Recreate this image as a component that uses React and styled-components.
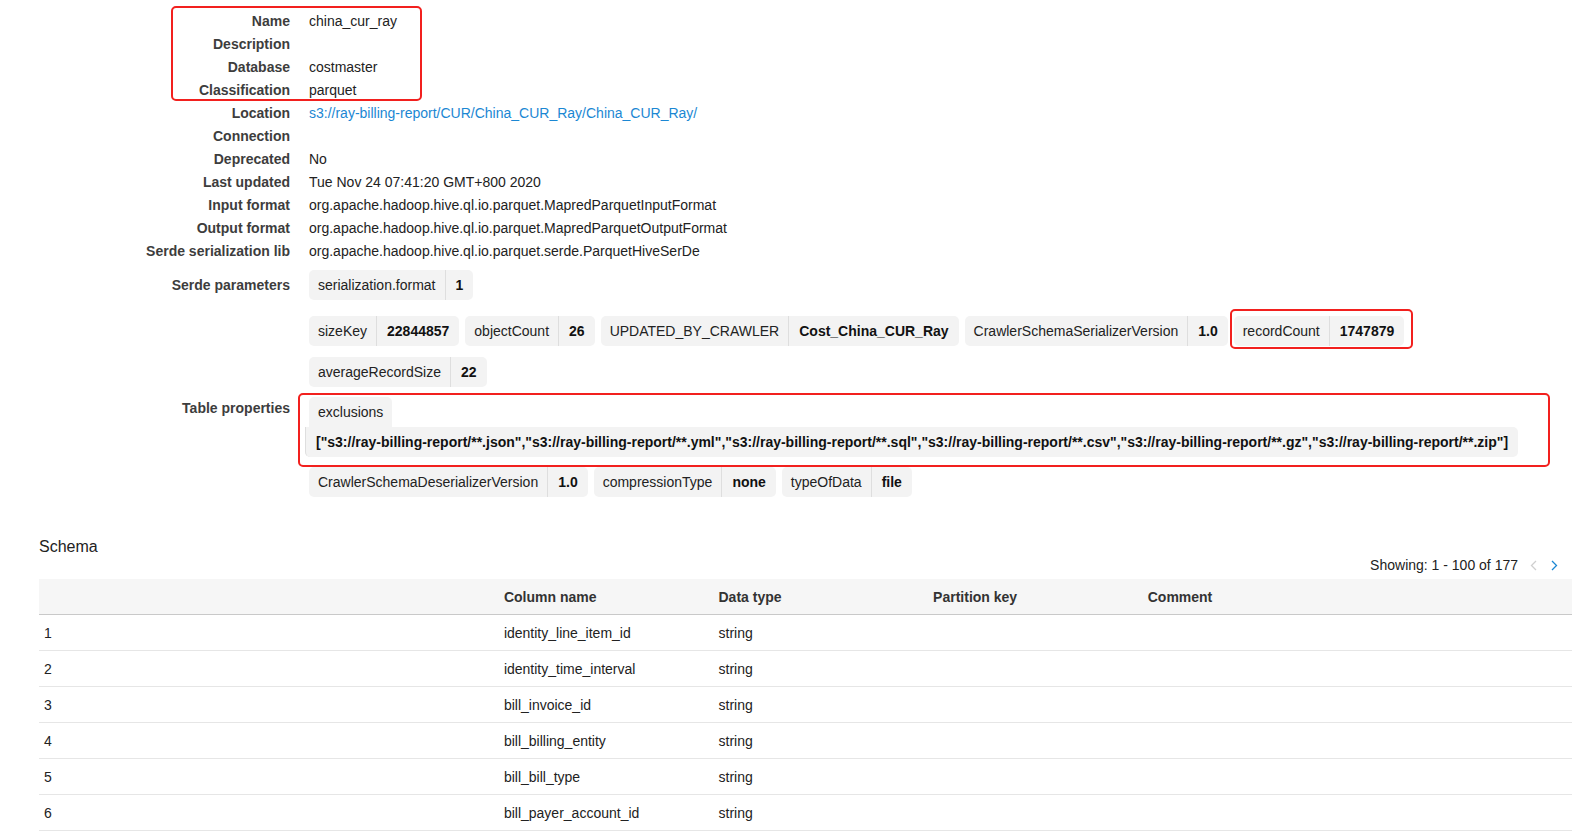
import styled, { createGlobalStyle } from "styled-components"

const GlobalStyle = createGlobalStyle`
   *, *::before, *::after {
      box-sizing: border-box;
   }
   body {
      margin: 0;
      background: #fff;
      font-family: "Liberation Sans", Arial, sans-serif;
      font-size: 14px;
      color: #222;
   }
`

const Page = styled.div`
   width: 1577px;
   padding-top: 10px;
`

const Details = styled.div`
   position: relative;
   display: grid;
   grid-template-columns: 290px 1fr;
   column-gap: 19px;
   line-height: 23px;
`

const Label = styled.div`
   text-align: right;
   font-weight: bold;
   color: #3d3d3d;
   line-height: ${(p) => p.$lh || 23}px;
   margin-top: ${(p) => p.$mt || 0}px;
`

const Value = styled.div`
   color: #222;
   min-height: 23px;
`

const Link = styled.a`
   color: #1b87d3;
   text-decoration: none;
`

const ChipStack = styled.div`
   display: flex;
   flex-direction: column;
   align-items: flex-start;
   padding-top: ${(p) => p.$pt || 0}px;
`

const ChipRow = styled.div`
   display: flex;
   gap: 6px;
   margin-bottom: ${(p) => p.$mb || 0}px;
`

const Chip = styled.div`
   display: flex;
   height: 30px;
   line-height: 30px;
   background: #f3f3f3;
   border-radius: 5px;
   white-space: nowrap;
`

const ChipKey = styled.span`
   padding: 0 9px 0 9px;
   color: #222;
`

const ChipVal = styled.span`
   padding: 0 10px;
   font-weight: bold;
   color: #111;
   border-left: 1px solid #dedede;
`

const WrapChip = styled.div`
   display: flex;
   flex-direction: column;
   align-items: flex-start;
   margin-bottom: 10px;
`

const WrapKey = styled.div`
   height: 30px;
   line-height: 30px;
   padding: 0 9px;
   background: #f3f3f3;
   border-radius: 5px 5px 0 0;
`

const WrapVal = styled.div`
   height: 30px;
   line-height: 30px;
   margin-left: -4px;
   padding: 0 10px 0 10px;
   background: #f3f3f3;
   border-left: 1px solid #dedede;
   border-radius: 0 5px 5px 5px;
   font-weight: bold;
   color: #111;
   white-space: nowrap;
`

const Annotation = styled.div`
   position: absolute;
   border: 2.5px solid #f2201e;
   border-radius: 5px;
   pointer-events: none;
`

const Schema = styled.section`
   margin-top: 40px;
   padding: 0 5px 0 39px;
`

const Title = styled.div`
   font-size: 16px;
   line-height: 20px;
   color: #222;
`

const Pager = styled.div`
   display: flex;
   justify-content: flex-end;
   align-items: center;
   gap: 12px;
   margin-top: -2px;
   padding-right: 14px;
   line-height: 20px;
   color: #222;
`

const PagerButtons = styled.div`
   display: flex;
   align-items: center;
   gap: 14px;
`

const Table = styled.div`
   margin-top: 4px;
   width: 1533px;
`

const Row = styled.div`
   display: grid;
   grid-template-columns: 30% 14% 14% 14% 28%;
   height: 36px;
   align-items: center;
   background: ${(p) => (p.$head ? "#f6f6f6" : "transparent")};
   border-bottom: 1px solid ${(p) => (p.$head ? "#c9c9c9" : "#e6e6e6")};
   font-weight: ${(p) => (p.$head ? "bold" : "normal")};
   color: ${(p) => (p.$head ? "#333" : "#222")};
`

const Cell = styled.div`
   padding-left: 5px;
   white-space: nowrap;
`

const Chevron = ({ dir, color }) => (
   <svg width="7" height="11" viewBox="0 0 7 11">
      <path
         d={dir === "left" ? "M6 1 L1.5 5.5 L6 10" : "M1 1 L5.5 5.5 L1 10"}
         fill="none"
         stroke={color}
         strokeWidth="1.3"
      />
   </svg>
)

const fields = [
   ["Name", "china_cur_ray"],
   ["Description", ""],
   ["Database", "costmaster"],
   ["Classification", "parquet"],
   ["Location", <Link href="#">s3://ray-billing-report/CUR/China_CUR_Ray/China_CUR_Ray/</Link>],
   ["Connection", ""],
   ["Deprecated", "No"],
   ["Last updated", "Tue Nov 24 07:41:20 GMT+800 2020"],
   ["Input format", "org.apache.hadoop.hive.ql.io.parquet.MapredParquetInputFormat"],
   ["Output format", "org.apache.hadoop.hive.ql.io.parquet.MapredParquetOutputFormat"],
   ["Serde serialization lib", "org.apache.hadoop.hive.ql.io.parquet.serde.ParquetHiveSerDe"],
]

const exclusions =
   '["s3://ray-billing-report/**.json","s3://ray-billing-report/**.yml","s3://ray-billing-report/**.sql","s3://ray-billing-report/**.csv","s3://ray-billing-report/**.gz","s3://ray-billing-report/**.zip"]'

const columns = [
   "identity_line_item_id",
   "identity_time_interval",
   "bill_invoice_id",
   "bill_billing_entity",
   "bill_bill_type",
   "bill_payer_account_id",
]

function KV({ k, v }) {
   return (
      <Chip>
         <ChipKey>{k}</ChipKey>
         <ChipVal>{v}</ChipVal>
      </Chip>
   )
}

export default function App() {
   return (
      <Page>
         <GlobalStyle />
         <Details>
            {fields.map(([label, value]) => (
               <>
                  <Label key={label}>{label}</Label>
                  <Value>{value}</Value>
               </>
            ))}

            <Label $lh={30} $mt={7}>Serde parameters</Label>
            <ChipStack $pt={7}>
               <ChipRow $mb={16}>
                  <KV k="serialization.format" v="1" />
               </ChipRow>
               <ChipRow $mb={11}>
                  <KV k="sizeKey" v="22844857" />
                  <KV k="objectCount" v="26" />
                  <KV k="UPDATED_BY_CRAWLER" v="Cost_China_CUR_Ray" />
                  <KV k="CrawlerSchemaSerializerVersion" v="1.0" />
                  <KV k="recordCount" v="1747879" />
               </ChipRow>
               <ChipRow $mb={10}>
                  <KV k="averageRecordSize" v="22" />
               </ChipRow>
            </ChipStack>

            <Label>Table properties</Label>
            <ChipStack>
               <WrapChip>
                  <WrapKey>exclusions</WrapKey>
                  <WrapVal>{exclusions}</WrapVal>
               </WrapChip>
               <ChipRow>
                  <KV k="CrawlerSchemaDeserializerVersion" v="1.0" />
                  <KV k="compressionType" v="none" />
                  <KV k="typeOfData" v="file" />
               </ChipRow>
            </ChipStack>

            <Annotation style={{ left: 171, top: -4, width: 251, height: 95 }} />
            <Annotation style={{ left: 1230, top: 299, width: 183, height: 40 }} />
            <Annotation style={{ left: 298, top: 383, width: 1252, height: 74 }} />
         </Details>

         <Schema>
            <Title>Schema</Title>
            <Pager>
               <span>Showing: 1 - 100 of 177</span>
               <PagerButtons>
                  <Chevron dir="left" color="#cfcfcf" />
                  <Chevron dir="right" color="#1b87d3" />
               </PagerButtons>
            </Pager>
            <Table>
               <Row $head>
                  <Cell />
                  <Cell>Column name</Cell>
                  <Cell>Data type</Cell>
                  <Cell>Partition key</Cell>
                  <Cell>Comment</Cell>
               </Row>
               {columns.map((name, i) => (
                  <Row key={name}>
                     <Cell>{i + 1}</Cell>
                     <Cell>{name}</Cell>
                     <Cell>string</Cell>
                     <Cell />
                     <Cell />
                  </Row>
               ))}
            </Table>
         </Schema>
      </Page>
   )
}
